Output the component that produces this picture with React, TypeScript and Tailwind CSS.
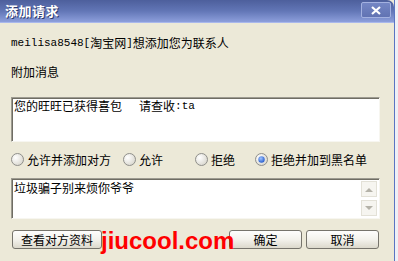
import React from "react";

const cjk = '"Noto Sans CJK SC", "Liberation Sans", sans-serif';
const mono = '"Liberation Mono", "Noto Sans CJK SC", monospace';

const Radio = ({ checked }: { checked?: boolean }) => (
  <svg width="13" height="13" viewBox="0 0 13 13" className="shrink-0">
    <defs>
      <radialGradient id="rb" cx="0.35" cy="0.35" r="0.8">
        <stop offset="0" stopColor="#ffffff" />
        <stop offset="1" stopColor="#d4d2c8" />
      </radialGradient>
      <radialGradient id="rd" cx="0.4" cy="0.35" r="0.7">
        <stop offset="0" stopColor="#9fc4ff" />
        <stop offset="1" stopColor="#2157c9" />
      </radialGradient>
    </defs>
    <circle cx="6.5" cy="6.5" r="6" fill="url(#rb)" stroke="#8f8f8a" strokeWidth="1" />
    {checked && <circle cx="6.5" cy="6.5" r="3.2" fill="url(#rd)" />}
  </svg>
);

const Btn = ({ children, className }: { children: React.ReactNode; className?: string }) => (
  <div
    className={
      "h-[19px] flex items-center justify-center rounded-[3px] border border-[#76746c] bg-linear-to-b from-[#fefefd] via-[#f3f2ec] to-[#dcd9cc] text-[12px] text-black " +
      (className ?? "")
    }
    style={{ fontFamily: cjk }}
  >
    {children}
  </div>
);

const Field = ({ children, className }: { children?: React.ReactNode; className?: string }) => (
  <div
    className={
      "relative bg-white border-t border-l border-[#9d9b91] border-r border-b border-r-[#f7f6f0] border-b-[#f7f6f0] shadow-[inset_1px_1px_0_#6f6d63] " +
      (className ?? "")
    }
  >
    {children}
  </div>
);

const ScrollBtn = ({ up }: { up?: boolean }) => (
  <div className="w-[16px] h-[16px] border border-[#e3e1d7] bg-[#f6f5f0] flex items-center justify-center">
    <svg width="8" height="5" viewBox="0 0 8 5">
      {up ? <path d="M0 5 L4 1 L8 5 Z" fill="#b4b2a8" /> : <path d="M0 0 L4 4 L8 0 Z" fill="#b4b2a8" />}
    </svg>
  </div>
);

export default function App() {
  return (
    <div className="w-[398px] h-[261px] relative overflow-hidden flex bg-[#eef0f6]">
      <div className="w-[395px] h-full flex flex-col bg-[#ece9d8] border-r border-[#5a74c2]">
        {/* title bar */}
        <div className="h-[23px] shrink-0 rounded-tr-[7px] bg-linear-to-b from-[#4d5f9c] via-[#6276b6] to-[#8d9fdc] border-b border-[#a9b8ec] flex items-center justify-between pl-[5px] pr-[3px]">
          <span
            className="text-white font-bold text-[13px] tracking-[0.5px] [text-shadow:1px_1px_0_#2d3a6e]"
            style={{ fontFamily: cjk }}
          >
            添加请求
          </span>
          <div className="w-[30px] h-[16px] mt-[-2px] rounded-[2px] border border-[#a3b1e0] bg-linear-to-b from-[#7486c4] to-[#6173b3] flex items-center justify-center">
            <svg width="10" height="9" viewBox="0 0 10 9">
              <path d="M1 1 L9 8 M9 1 L1 8" stroke="#ffffff" strokeWidth="2.2" />
            </svg>
          </div>
        </div>

        {/* body */}
        <div className="flex flex-col pl-[11px] pr-[15px] text-[12px] leading-[12px] text-black" style={{ fontFamily: cjk }}>
          <div className="mt-[14px] h-[12px] flex items-center">
            <span className="text-[11px]" style={{ fontFamily: mono }}>meilisa8548[</span>
            <span>淘宝网</span>
            <span className="text-[11px]" style={{ fontFamily: mono }}>]</span>
            <span>想添加您为联系人</span>
          </div>
          <div className="mt-[17px] h-[12px]">附加消息</div>

          <Field className="mt-[19px] h-[45px] w-[369px]">
            <div className="pl-[2px] pt-[2px] flex items-center">
              <span>您的旺旺已获得喜包</span>
              <span className="ml-[17px]">请查收</span>
              <span className="text-[11px]" style={{ fontFamily: mono }}>:ta</span>
            </div>
          </Field>

          <div className="mt-[11px] h-[13px] flex items-center">
            <Radio />
            <span className="ml-[3px]">允许并添加对方</span>
            <div className="ml-[12px]"><Radio /></div>
            <span className="ml-[3px]">允许</span>
            <div className="ml-[32px]"><Radio /></div>
            <span className="ml-[3px]">拒绝</span>
            <div className="ml-[20px]"><Radio checked /></div>
            <span className="ml-[3px]">拒绝并加到黑名单</span>
          </div>

          <Field className="mt-[12px] h-[41px] w-[369px]">
            <div className="pl-[2px] pt-[3px]">垃圾骗子别来烦你爷爷</div>
            <div className="absolute right-[2px] top-[2px] flex flex-col gap-[3px]">
              <ScrollBtn up />
              <ScrollBtn />
            </div>
          </Field>

          <div className="mt-[11px] flex items-center">
            <Btn className="w-[90px] ml-[1px]">查看对方资料</Btn>
            <Btn className="w-[73px] ml-[127px]">确定</Btn>
            <Btn className="w-[73px] ml-[4px]">取消</Btn>
          </div>
        </div>
      </div>

      {/* watermark overlay */}
      <div
        className="absolute left-[101px] top-[229px] text-[24px] leading-[24px] font-bold text-[#ff0000]"
        style={{ fontFamily: '"Liberation Sans", Arial, sans-serif' }}
      >
        jiucool.com
      </div>
    </div>
  );
}
